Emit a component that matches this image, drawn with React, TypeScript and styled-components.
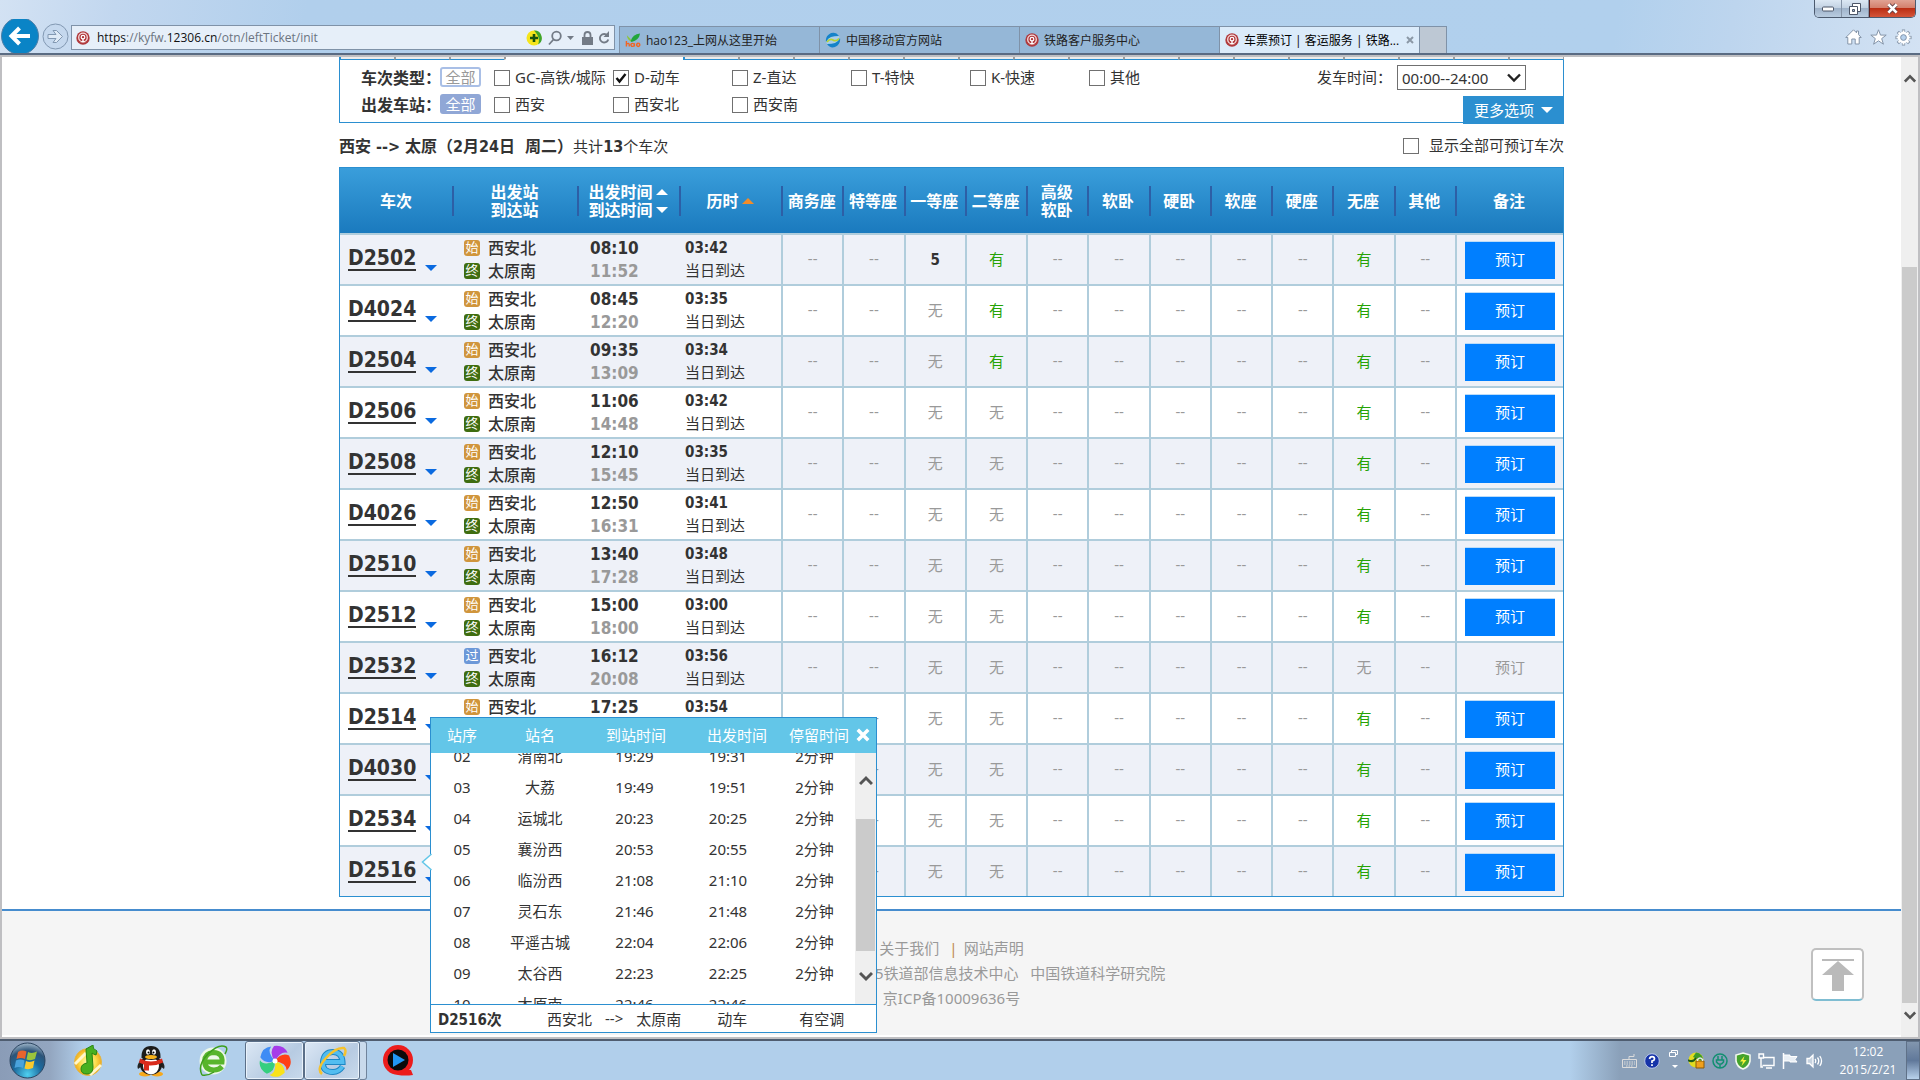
import React from "react";
import styled, { createGlobalStyle, css } from "styled-components";

const sans = `"Noto Sans", "Noto Sans CJK SC", sans-serif`;
const tahoma = `"DejaVu Sans Condensed", "Noto Sans", "Noto Sans CJK SC", sans-serif`;
const shell = `"Open Sans", "Noto Sans CJK SC", sans-serif`;

const GlobalStyle = createGlobalStyle`
  *, *::before, *::after { box-sizing: border-box; }
  body { margin: 0; color: #333; font-family: ${sans}; font-size: 15px; }
  button, select, input { font-family: inherit; font-size: inherit; color: inherit; margin: 0; }
  button { border: 0; padding: 0; background: none; cursor: pointer; }
  a { color: inherit; text-decoration: none; }
  svg { display: block; flex: none; }
`;

/* ---------- Browser window ---------- */

const Desktop = styled.div`
  display: flex;
  flex-direction: column;
  height: 100vh;
  overflow: hidden;
`;

const TopBar = styled.header`
  display: flex;
  align-items: flex-end;
  flex: none;
  height: 55px;
  border-bottom: 2px solid #5a6b82;
  background: linear-gradient(100deg, #d3e2f3 0, #c2d7ef 6%, #b1cfec 16%, #b1d0ed 84%, #bdd5ee 90%, #d3e2f3 100%);
  font-family: ${shell};
  font-size: 12px;
`;

const NavButtons = styled.div`
  display: flex;
  align-items: center;
  flex: none;
  gap: 3px;
  width: 71px;
  height: 34px;
  padding-left: 1px;
  overflow: hidden;
`;

const AddressBar = styled.form`
  display: flex;
  align-items: center;
  flex: 0 1 544px;
  gap: 5px;
  height: 25px;
  margin-bottom: 3px;
  padding: 0 4px;
  border: 1px solid #7f92a8;
  background: #e6eff9;
`;

const Url = styled.div`
  flex: 1;
  padding-left: 2px;
  color: #6b7480;
  white-space: nowrap;
  b { color: #111; font-weight: 400; }
`;

const Tabs = styled.nav`
  display: flex;
  flex: 0 1 828px;
  height: 27px;
  margin-left: 4px;
  border: 1px solid #7f92a8;
  border-bottom: 0;
`;

const Tab = styled.a<{ $active?: boolean }>`
  display: flex;
  align-items: center;
  flex: 0 0 200px;
  gap: 5px;
  padding: 0 5px;
  border-right: 1px solid #7f92a8;
  background: ${(p) => (p.$active ? "#dbebfa" : "#95b7d7")};
  color: ${(p) => (p.$active ? "#000" : "#222")};
  white-space: nowrap;
`;

const TabTitle = styled.span`
  flex: 1;
`;

const NewTab = styled.button`
  flex: 1;
  background: #bdc8d4;
`;

const WindowSide = styled.div`
  display: flex;
  flex-direction: column;
  align-items: flex-end;
  justify-content: space-between;
  height: 53px;
  margin-left: auto;
  padding: 0 4px 7px 0;
`;

const WindowButtons = styled.div`
  display: flex;
  height: 18px;
  border: 1px solid #4c5a6e;
  border-top: 0;
  border-radius: 0 0 5px 5px;
  overflow: hidden;
`;

const WindowButton = styled.button<{ $close?: boolean }>`
  display: flex;
  align-items: center;
  justify-content: center;
  width: ${(p) => (p.$close ? 46 : 27)}px;
  border-left: ${(p) => (p.$close ? 1 : 0)}px solid #5a2020;
  border-right: ${(p) => (p.$close ? 0 : 1)}px solid #8594a8;
  background: ${(p) =>
    p.$close
      ? "linear-gradient(#e0a394 0, #d4806d 45%, #bb2e14 50%, #d4553a 100%)"
      : "linear-gradient(#dce8f4 0, #c3d2e3 45%, #9fb3ca 50%, #b9cce0 100%)"};
`;

const ToolIcons = styled.div`
  display: flex;
  gap: 8px;
  padding-right: 4px;
`;

const Frame = styled.div`
  display: flex;
  flex: 1;
  min-height: 0;
  border: 2px solid #bfbfc2;
  background: #fff;
`;

const Page = styled.main`
  display: flex;
  flex-direction: column;
  flex: 1;
  min-width: 0;
  overflow: hidden;
`;

const ScrollTrack = styled.div<{ $pad: number; $bottom: number; $width: number }>`
  display: flex;
  flex-direction: column;
  align-items: center;
  flex: none;
  width: ${(p) => p.$width}px;
  padding: ${(p) => p.$pad}px 0 ${(p) => p.$bottom}px;
  background: #efefef;
`;

const ScrollThumb = styled.div<{ $before: number; $after: number }>`
  flex: 1;
  width: calc(100% - 2px);
  margin: ${(p) => p.$before}px 0 ${(p) => p.$after}px;
  background: #cbcbcb;
`;

/* ---------- Ticket search page ---------- */

const Content = styled.div`
  width: 100%;
  max-width: 1225px;
  margin: 0 auto 12px;
`;

const DateTabs = styled.div`
  display: flex;
  height: 3px;
`;

const DateTab = styled.span<{ $selected?: boolean }>`
  flex: ${(p) => (p.$selected ? "0 0 179px" : "1 0 0")};
  border-left: 2px solid #9c9c9c;
  border-bottom: 1px solid ${(p) => (p.$selected ? "#fff" : "#2b8fd0")};
  background: ${(p) => (p.$selected ? "#fff" : "#ececec")};
  &:first-child, &:nth-child(5) { border-left-color: #2b8fd0; }
  &:last-child { border-right: 1px solid #9c9c9c; }
`;

const Filters = styled.section`
  position: relative;
  padding: 3px 37px 5px 21px;
  border: 1px solid #2b8fd0;
  border-top: 0;
`;

const FilterRow = styled.div`
  display: flex;
  align-items: center;
  height: 27px;
`;

const FilterName = styled.b`
  width: 79px;
  font-size: 16px;
  white-space: nowrap;
`;

const AllTag = styled.button<{ $on?: boolean }>`
  width: 41px;
  height: 20px;
  margin-right: 13px;
  border: 2px solid ${(p) => (p.$on ? "#90a7d6" : "#a9bfe6")};
  border-radius: 3px;
  background: ${(p) => (p.$on ? "#90a7d6" : "#fff")};
  color: ${(p) => (p.$on ? "#fff" : "#999")};
  line-height: 16px;
`;

const CheckLabel = styled.label<{ $wide?: boolean }>`
  display: flex;
  align-items: center;
  gap: ${(p) => (p.$wide ? 10 : 5)}px;
  width: ${(p) => (p.$wide ? "auto" : "119px")};
  white-space: nowrap;
`;

const CheckBox = styled.input`
  flex: none;
  width: 16px;
  height: 16px;
  appearance: none;
  border: 1px solid #707070;
  background: #fff;
  && { margin-top: 2px; }
  &:checked {
    background: #fff
      url("data:image/svg+xml,%3Csvg xmlns='http://www.w3.org/2000/svg' viewBox='0 0 14 14'%3E%3Cpath d='M2.5 7l3 3.5L11.500 3' fill='none' stroke='%23111' stroke-width='2.400'/%3E%3C/svg%3E");
  }
`;

const DepartTime = styled.label`
  display: flex;
  align-items: center;
  gap: 5px;
  margin-left: auto;
`;

const SelectBox = styled.span`
  display: grid;
  align-items: center;
  width: 129px;
  padding-top: 2px;
  > * { grid-area: 1 / 1; }
  svg { justify-self: end; margin-right: 5px; pointer-events: none; }
`;

const Select = styled.select`
  width: 100%;
  height: 25px;
  padding: 0 4px;
  appearance: none;
  border: 1px solid #707070;
  border-radius: 0;
  background: #fff;
`;

const MoreButton = styled.button`
  position: absolute;
  right: -1px;
  bottom: -2px;
  display: flex;
  align-items: center;
  justify-content: center;
  gap: 7px;
  width: 101px;
  height: 28px;
  padding-bottom: 1px;
  background: #2b8fd0;
  color: #fff;
`;

const Summary = styled.div`
  display: flex;
  align-items: center;
  justify-content: space-between;
  height: 44px;
  padding-bottom: 1px;
  white-space: pre;
  b { font-family: ${tahoma}; font-size: 16px; }
`;

const Result = styled.div`
  position: relative;
`;

const TrainTable = styled.table`
  width: 100%;
  table-layout: fixed;
  border: 1px solid #2b8fd0;
  border-collapse: separate;
  border-spacing: 0;
`;

const Column = styled.col<{ $w?: number }>`
  width: ${(p) => (p.$w ? `${p.$w}px` : "auto")};
`;

const HeadRow = styled.tr`
  background: linear-gradient(#3a9edb, #1a7abe);
`;

const HeadCell = styled.th`
  height: 65px;
  padding: 0;
  color: #fff;
  font-size: 16px;
  line-height: 18px;
  white-space: nowrap;
  & + & {
    background: linear-gradient(#2d5fa6, #2d5fa6) left center / 2px 30px no-repeat;
  }
`;

const HeadLine = styled.span`
  display: flex;
  align-items: center;
  justify-content: center;
  gap: 3px;
`;

const Row = styled.tr`
  &:nth-child(odd) { background: #eef1f8; }
`;

const Cell = styled.td<{ $pad?: number; $seat?: boolean; $tone?: string; $bold?: boolean }>`
  height: 51px;
  padding: 0 0 0 ${(p) => p.$pad ?? 0}px;
  border-top: 2px solid #b0cddc;
  color: ${(p) => p.$tone ?? "#333"};
  white-space: nowrap;
  ${(p) => p.$seat && css`padding-bottom: 3px; border-left: 2px solid #b0cddc; text-align: center;`}
  ${(p) => p.$bold && css`font-family: ${tahoma}; font-weight: 700; padding-bottom: 0;`}
`;

const BookCell = styled(Cell)`
  padding-bottom: 0;
`;

const TrainLink = styled.a`
  display: flex;
  align-items: center;
  gap: 9px;
  font: 700 21px/24px ${tahoma};
  span { border-bottom: 2px solid #333; line-height: 21px; }
  svg { margin-top: 17px; }
`;

const Line = styled.div`
  display: flex;
  align-items: center;
  height: 23px;
`;

const Station = styled.b`
  margin-left: 8px;
  padding-bottom: 2px;
  font-size: 16px;
  font-weight: 500;
`;

const Arrival = styled.span`
  padding-bottom: 3px;
`;

const StationMark = styled.span<{ $kind: string }>`
  width: 16px;
  height: 16px;
  border-radius: 3px;
  background: ${(p) => ({ 始: "#d0953c", 终: "#3f6d10", 过: "#6c98d8" } as Record<string, string>)[p.$kind]};
  color: #fff;
  font-size: 13px;
  line-height: 15px;
  text-align: center;
`;

const Time = styled.b<{ $arrive?: boolean; $small?: boolean }>`
  color: ${(p) => (p.$arrive ? "#999" : "#333")};
  font-family: ${tahoma};
  font-size: ${(p) => (p.$small ? 15 : 17)}px;
`;

const BookButton = styled.button`
  width: 90px;
  height: 38px;
  padding-bottom: 3px;
  border-top: 1px solid #bcdcf8;
  background: #007fff;
  color: #fff;
`;

/* ---------- Stops pop-up ---------- */

const Popup = styled.aside`
  position: absolute;
  top: 550px;
  left: 91px;
  width: 447px;
  border: 1px solid #2b8fd0;
  background: #fff;
`;

const Pointer = styled.svg`
  position: absolute;
  top: 135px;
  left: -10px;
`;

const PopupHead = styled.div`
  display: flex;
  align-items: center;
  height: 35px;
  padding-bottom: 2px;
  background: #63c6e8;
  color: #fff;
`;

const PopupCol = styled.span<{ $w: number }>`
  flex: 0 0 ${(p) => p.$w}px;
  text-align: center;
  white-space: nowrap;
`;

const CloseButton = styled.button`
  display: flex;
  justify-content: center;
  flex: 1;
`;

const PopupBody = styled.div`
  display: flex;
  height: 251px;
  overflow: hidden;
`;

const StopTable = styled.table`
  width: 424px;
  height: 279px;
  margin-top: -13px;
  table-layout: fixed;
  border-spacing: 0;
  td { height: 31px; padding: 0; text-align: center; line-height: 20px; }
`;

const PopupFoot = styled.div`
  display: flex;
  align-items: center;
  height: 28px;
  padding: 0 0 1px 7px;
  border-top: 1px solid #2b8fd0;
  b { flex: 0 0 109px; font-family: ${tahoma}; }
  span { flex: none; }
  span + span { margin-left: 13px; }
  em { font-style: normal; margin-left: 36px; }
  em + em { margin-left: 52px; }
`;

/* ---------- Page footer ---------- */

const Footer = styled.footer`
  display: flex;
  justify-content: center;
  flex: 1;
  margin-bottom: 2px;
  padding-top: 25px;
  border-top: 2px solid #468cce;
  background: #f5f5f5;
  color: #999;
  line-height: 25px;
  text-align: center;
  white-space: pre;
`;

const FooterText = styled.div`
  flex: 1;
  padding-left: 90px;
`;

const Divider = styled.i`
  padding: 0 6px 0 10px;
  color: #c08850;
  font-style: normal;
`;

const ToTop = styled.button`
  display: flex;
  justify-content: center;
  width: 53px;
  height: 53px;
  margin: 12px 37px 0 0;
  padding-top: 9px;
  border: 2px solid #c0c0c0;
  border-bottom-color: #7fbdd2;
  border-radius: 5px;
  background: #fff;
`;

/* ---------- Taskbar ---------- */

const Taskbar = styled.footer`
  display: flex;
  align-items: center;
  flex: none;
  height: 41px;
  border-top: 2px solid #4f5d70;
  background: linear-gradient(90deg, #8a9cb7 0, #93a6c0 50px, #b1cfeb 84px, #b1cfeb 1570px, #8aa0b9 1620px, #8aa0b9 100%);
  color: #fff;
  font-family: ${shell};
`;

const TaskButton = styled.button<{ $open?: boolean; $w: number }>`
  display: flex;
  align-items: center;
  justify-content: center;
  width: ${(p) => p.$w}px;
  height: 39px;
  ${(p) =>
    p.$open &&
    css`
      border: 1px solid #5b6f88;
      border-radius: 3px;
      background: linear-gradient(135deg, #dce8f5, #b7cbe2 60%, #c9daec);
      box-shadow: inset 0 0 0 1px #e9f2fb;
    `}
`;

const StackEdge = styled.span`
  width: 7px;
  height: 39px;
  margin-right: 3px;
  border: 1px solid #70849c;
  border-left: 0;
  border-radius: 0 3px 3px 0;
  background: #c9daec;
`;

const Tray = styled.div`
  display: flex;
  align-items: center;
  gap: 7px;
  height: 39px;
  margin-left: auto;
`;

const Clock = styled.time`
  width: 76px;
  font-size: 12px;
  line-height: 18px;
  text-align: center;
`;

const ShowDesktop = styled.button`
  width: 14px;
  height: 39px;
  border: 1px solid #5f7188;
  background: linear-gradient(#8296ae 0, #60789a 50%, #b9d2ec 100%);
`;

/* ---------- Drawings ---------- */

const RailLogo = () => (
  <svg width="14" height="14" viewBox="0 0 14 14">
    <circle cx="7" cy="7" r="6.700" fill="#b0393c" />
    <circle cx="7" cy="6.500" r="4.300" fill="none" stroke="#f6dcdc" strokeWidth="1.300" />
    <circle cx="7" cy="6.200" r="1.800" fill="none" stroke="#fff" strokeWidth="1.200" />
    <path d="M6.300 7h1.400v3l2 1.300H4.300l2-1.300z" fill="#fff" />
  </svg>
);

const HaoLogo = () => (
  <svg width="16" height="16" viewBox="0 0 17 16">
    <path d="M2 3l4 4 1 3C4 9 2 6 2 3z" fill="#8dc63f" />
    <path d="M6 9Q8 2 16 1q-1 7-9 9z" fill="#22a63b" />
    <path d="M1.500 9v6M1.500 12.500q2.500-2 3 .5v2M10 11.500v3.500M10 13q-1-2-3-1.200-1.500 1.200 0 2.800 2 .7 3-1M14 11.500a1.700 1.700 0 1 0 .1 0" fill="none" stroke="#f26522" strokeWidth="1.500" />
  </svg>
);

const MobileLogo = () => (
  <svg width="16" height="16" viewBox="0 0 16 16" fill="none" strokeWidth="1.700">
    <circle cx="8" cy="8" r="7" fill="#a9cdea" />
    <path d="M6 1Q0 4 1 10q2-4 5-5t8-1Q11-.5 6 1z" fill="#1583c9" />
    <path d="M10 15q6-3 5-9-2 4-5 5t-8 1q3 4.500 8 3z" fill="#1583c9" />
    <path d="M2 10q3-4 6-2t6-1.500" stroke="#b5d334" />
  </svg>
);

const Gear = () => (
  <svg width="17" height="17" viewBox="-9 -9 18 18">
    {[3.4, 2].map((w, layer) =>
      Array.from({ length: 8 }, (_, i) => (
        <path key={`${layer}-${i}`} d={layer ? "M0-4.500V-7.500" : "M0-4V-8.500"} stroke={layer ? "#fff" : "#8494a8"} strokeWidth={w} transform={`rotate(${i * 45})`} />
      ))
    )}
    <circle r="4.700" fill="#b7d2ee" stroke="#fff" strokeWidth="2.800" />
    <circle r="3" fill="none" stroke="#8494a8" />
  </svg>
);

const Chevron = ({ up, size = 14 }: { up?: boolean; size?: number }) => (
  <svg width={size} height="11" viewBox="0 0 14 11">
    <path d={up ? "M1 9l6-6 6 6" : "M1 2l6 6 6-6"} fill="none" stroke="#555" strokeWidth="3" />
  </svg>
);

const Triangle = ({ up, color }: { up?: boolean; color: string }) => (
  <svg width="12" height="6" viewBox="0 0 12 6">
    <path d={up ? "M0 6L6 0l6 6z" : "M0 0h12L6 6z"} fill={color} />
  </svg>
);

const Cross = ({ size, edge }: { size: number; edge?: string }) => (
  <svg width={size} height={size} viewBox="0 0 12 12">
    {edge && <path d="M2 2l8 8M10 2l-8 8" stroke={edge} strokeWidth="4.500" />}
    <path d="M1.500 1.500l9 9M10.500 1.500l-9 9" stroke="#fff" strokeWidth="3" />
  </svg>
);

/* ---------- Data ---------- */

type Seat = string;
type Train = { no: string; depart: string; arrive: string; span: string; pass?: boolean; first?: Seat; second?: Seat };

const trains: Train[] = [
  { no: "D2502", depart: "08:10", arrive: "11:52", span: "03:42", first: "5", second: "有" },
  { no: "D4024", depart: "08:45", arrive: "12:20", span: "03:35", second: "有" },
  { no: "D2504", depart: "09:35", arrive: "13:09", span: "03:34", second: "有" },
  { no: "D2506", depart: "11:06", arrive: "14:48", span: "03:42" },
  { no: "D2508", depart: "12:10", arrive: "15:45", span: "03:35" },
  { no: "D4026", depart: "12:50", arrive: "16:31", span: "03:41" },
  { no: "D2510", depart: "13:40", arrive: "17:28", span: "03:48" },
  { no: "D2512", depart: "15:00", arrive: "18:00", span: "03:00" },
  { no: "D2532", depart: "16:12", arrive: "20:08", span: "03:56", pass: true },
  { no: "D2514", depart: "17:25", arrive: "21:19", span: "03:54" },
  { no: "D4030", depart: "17:55", arrive: "21:40", span: "03:45" },
  { no: "D2534", depart: "18:20", arrive: "22:05", span: "03:45" },
  { no: "D2516", depart: "19:00", arrive: "22:46", span: "03:46" },
];

const seatHeads = ["商务座", "特等座", "一等座", "二等座", "高级|软卧", "软卧", "硬卧", "软座", "硬座", "无座", "其他"];

const stops = [
  ["02", "渭南北", "19:29", "19:31", "2分钟"],
  ["03", "大荔", "19:49", "19:51", "2分钟"],
  ["04", "运城北", "20:23", "20:25", "2分钟"],
  ["05", "襄汾西", "20:53", "20:55", "2分钟"],
  ["06", "临汾西", "21:08", "21:10", "2分钟"],
  ["07", "灵石东", "21:46", "21:48", "2分钟"],
  ["08", "平遥古城", "22:04", "22:06", "2分钟"],
  ["09", "太谷西", "22:23", "22:25", "2分钟"],
  ["10", "太原南", "22:46", "22:46", ""],
];

const seatsOf = (t: Train): Seat[] => [
  "--", "--", t.first ?? "无", t.second ?? "无", "--", "--", "--", "--", "--", t.pass ? "无" : "有", "--",
];

const toneOf = (s: Seat) => (s === "有" ? "#26a306" : s === "无" || s === "--" ? "#999" : "#333");

/* ---------- Parts ---------- */

const Check = ({ text, checked, wide }: { text: string; checked?: boolean; wide?: boolean }) => (
  <CheckLabel $wide={wide}>
    <CheckBox type="checkbox" defaultChecked={checked} />
    {text}
  </CheckLabel>
);

const BrowserTop = () => (
  <TopBar>
    <NavButtons>
      <button aria-label="后退">
        <svg width="38" height="38" viewBox="0 0 38 38">
          <circle cx="19" cy="19" r="18.500" fill="#0a84c6" stroke="#4c7fa8" />
          <path d="M29 19H11M18.500 11l-8 8 8 8" fill="none" stroke="#fff" strokeWidth="4" />
        </svg>
      </button>
      <button aria-label="前进">
        <svg width="27" height="27" viewBox="0 0 27 27" fill="none" stroke="#8298b2">
          <circle cx="13.500" cy="13.500" r="12.500" fill="#c5d8ee" />
          <path d="M6 11.500h8l-3-4h3.500l6 6-6 6H11l3-4H6z" fill="#dfeaf6" />
        </svg>
      </button>
    </NavButtons>
    <AddressBar>
      <RailLogo />
      <Url><b>https</b>://kyfw.<b>12306.cn</b>/otn/leftTicket/init</Url>
      <svg width="16" height="16" viewBox="0 0 16 16">
        <circle cx="8" cy="8" r="7.500" fill="#f5e51c" />
        <path d="M8 .5a7.500 7.500 0 0 1 4 14Q15 8 8 .5z" fill="#3ea52c" />
        <path d="M8 4v8M4 8h8" stroke="#17520e" strokeWidth="2.600" />
      </svg>
      <svg width="30" height="16" viewBox="0 0 30 16" fill="none" stroke="#737b86" strokeWidth="1.800">
        <circle cx="9.500" cy="6" r="4.300" />
        <path d="M6.500 9.500L2 14.500" />
        <path d="M20 6h7l-3.500 4z" fill="#737b86" stroke="none" />
      </svg>
      <svg width="11" height="14" viewBox="0 0 11 14">
        <path d="M0 6h11v8H0z" fill="#737b86" />
        <path d="M2.500 7V4a3 3 0 0 1 6 0v3" fill="none" stroke="#737b86" strokeWidth="1.800" />
      </svg>
      <svg width="12" height="14" viewBox="0 0 12 14">
        <path d="M9.500 4.500A4.300 4.300 0 1 0 10.300 8.500" fill="none" stroke="#737b86" strokeWidth="1.900" />
        <path d="M11 0v6H5.500z" fill="#737b86" />
      </svg>
    </AddressBar>
    <Tabs>
      <Tab href="#"><HaoLogo /><TabTitle>hao123_上网从这里开始</TabTitle></Tab>
      <Tab href="#"><MobileLogo /><TabTitle>中国移动官方网站</TabTitle></Tab>
      <Tab href="#"><RailLogo /><TabTitle>铁路客户服务中心</TabTitle></Tab>
      <Tab href="#" $active>
        <RailLogo />
        <TabTitle>车票预订 | 客运服务 | 铁路...</TabTitle>
        <svg width="8" height="8" viewBox="0 0 8 8"><path d="M1 1l6 6M7 1L1 7" stroke="#8b98a6" strokeWidth="2" /></svg>
      </Tab>
      <NewTab aria-label="新选项卡" />
    </Tabs>
    <WindowSide>
      <WindowButtons>
        <WindowButton aria-label="最小化">
          <svg width="12" height="6" viewBox="0 0 12 6"><rect x=".5" y="1" width="11" height="4" rx="1" fill="#fff" stroke="#4c5668" /></svg>
        </WindowButton>
        <WindowButton aria-label="还原">
          <svg width="12" height="12" viewBox="0 0 12 12" fill="#fff" stroke="#4c5668">
            <path d="M3.500.5h8v8h-8z" />
            <path d="M.5 3.500h8v8h-8z" />
            <path d="M3.500 6.500h2v2h-2z" fill="#a9bbd0" />
          </svg>
        </WindowButton>
        <WindowButton aria-label="关闭" $close><Cross size={11} edge="#5c3f46" /></WindowButton>
      </WindowButtons>
      <ToolIcons>
        <svg width="17" height="16" viewBox="0 0 17 16" fill="#fff" stroke="#8494a8">
          <path d="M8.500.8L.8 8.500h2V15h4v-5h3.400v5h4V8.500h2L13.500 5.500V2h-2v1.800z" />
        </svg>
        <svg width="17" height="16" viewBox="0 0 17 16" fill="#fff" stroke="#8494a8">
          <path d="M8.500.8l2 5.300h5.700l-4.500 3.500 1.700 5.600-4.900-3.400-4.900 3.400 1.700-5.600L.8 6.100h5.700z" />
        </svg>
        <Gear />
      </ToolIcons>
    </WindowSide>
  </TopBar>
);

const FilterPanel = () => (
  <>
    <DateTabs>
      {Array.from({ length: 20 }, (_, i) => <DateTab key={i} $selected={i === 3} />)}
    </DateTabs>
    <Filters>
      <FilterRow>
        <FilterName>车次类型：</FilterName>
        <AllTag>全部</AllTag>
        <Check text="GC-高铁/城际" />
        <Check text="D-动车" checked />
        <Check text="Z-直达" />
        <Check text="T-特快" />
        <Check text="K-快速" />
        <Check text="其他" />
        <DepartTime>
          发车时间：
          <SelectBox>
            <Select defaultValue="all"><option value="all">00:00--24:00</option></Select>
            <svg width="14" height="10" viewBox="0 0 14 10"><path d="M1 1.500l6 6 6-6" fill="none" stroke="#222" strokeWidth="2.400" /></svg>
          </SelectBox>
        </DepartTime>
      </FilterRow>
      <FilterRow>
        <FilterName>出发车站：</FilterName>
        <AllTag $on>全部</AllTag>
        <Check text="西安" />
        <Check text="西安北" />
        <Check text="西安南" />
      </FilterRow>
      <MoreButton>更多选项 <Triangle color="#fff" /></MoreButton>
    </Filters>
  </>
);

const TrainRow = ({ train }: { train: Train }) => (
  <Row>
    <Cell $pad={8}>
      <TrainLink href="#"><span>{train.no}</span><Triangle color="#0a6ae0" /></TrainLink>
    </Cell>
    <Cell $pad={12}>
      <Line><StationMark $kind={train.pass ? "过" : "始"}>{train.pass ? "过" : "始"}</StationMark><Station>西安北</Station></Line>
      <Line><StationMark $kind="终">终</StationMark><Station>太原南</Station></Line>
    </Cell>
    <Cell $pad={13}>
      <Line><Time>{train.depart}</Time></Line>
      <Line><Time $arrive>{train.arrive}</Time></Line>
    </Cell>
    <Cell $pad={6}>
      <Line><Time $small>{train.span}</Time></Line>
      <Line><Arrival>当日到达</Arrival></Line>
    </Cell>
    {seatsOf(train).map((s, i) => (
      <Cell key={i} $seat $tone={toneOf(s)} $bold={s === "5"}>{s}</Cell>
    ))}
    {train.pass ? <Cell $seat $tone="#999">预订</Cell> : <BookCell $seat><BookButton>预订</BookButton></BookCell>}
  </Row>
);

const StopsPopup = () => (
  <Popup>
    <PopupHead>
      <PopupCol $w={62}>站序</PopupCol>
      <PopupCol $w={94}>站名</PopupCol>
      <PopupCol $w={98}>到站时间</PopupCol>
      <PopupCol $w={104}>出发时间</PopupCol>
      <PopupCol $w={54}>停留时间</PopupCol>
      <CloseButton aria-label="关闭"><Cross size={14} /></CloseButton>
    </PopupHead>
    <PopupBody>
      <StopTable>
        <colgroup><Column $w={62} /><Column $w={94} /><Column $w={95} /><Column $w={92} /><Column /></colgroup>
        <tbody>
          {stops.map((s) => <tr key={s[0]}>{s.map((v, i) => <td key={i}>{v}</td>)}</tr>)}
        </tbody>
      </StopTable>
      <ScrollTrack $pad={22} $bottom={22} $width={21}>
        <Chevron up />
        <ScrollThumb $before={33} $after={20} />
        <Chevron />
      </ScrollTrack>
    </PopupBody>
    <PopupFoot>
      <b>D2516次</b>
      <span>西安北</span><span>--&gt;</span><span>太原南</span>
      <em>动车</em><em>有空调</em>
    </PopupFoot>
    <Pointer width="11" height="18" viewBox="0 0 11 18">
      <path d="M11 0v18L1 9z" fill="#fff" />
      <path d="M10.500 1L1.500 9l9 8" fill="none" stroke="#63c6e8" strokeWidth="1.500" />
    </Pointer>
  </Popup>
);

const TaskIcons = () => (
  <>
    <TaskButton $w={54} aria-label="开始">
      <svg width="37" height="37" viewBox="0 0 37 37">
        <defs>
          <radialGradient id="orb" cx=".5" cy=".9" r=".9">
            <stop offset="0" stopColor="#4fd0f0" /><stop offset=".45" stopColor="#1b6a9e" /><stop offset=".75" stopColor="#2d5478" /><stop offset="1" stopColor="#9fb6ca" />
          </radialGradient>
        </defs>
        <circle cx="18.500" cy="18.500" r="17.500" fill="url(#orb)" stroke="#2b4460" />
        <path d="M9 10q4-2.500 8.500-.5L16 17q-4-2-8.500 0z" fill="#e8642c" />
        <path d="M19 10q4 2 9-.5L26 17q-4 2-8.500.5z" fill="#9ac43c" />
        <path d="M7 18.500q4-2 8.500 0L14 26q-4-2-8.500 0z" fill="#4aa3dc" />
        <path d="M17 19q4 2 8.500-.5L24 26q-4.500 2-8.500.5z" fill="#fbc92c" />
      </svg>
    </TaskButton>
    <TaskButton $w={68} aria-label="音乐">
      <svg width="30" height="32" viewBox="0 0 30 32">
        <defs><radialGradient id="disc"><stop offset="0" stopColor="#fffbb0" /><stop offset=".6" stopColor="#fbdc4c" /><stop offset="1" stopColor="#f0a91c" /></radialGradient></defs>
        <circle cx="15" cy="17" r="13.500" fill="url(#disc)" stroke="#e2b748" />
        <path d="M2 19L13 8M17 30l11-10" stroke="#fff6cc" strokeWidth="3" fill="none" />
        <path d="M13 4l7-4q-1 4 4 6l-1 4q-3-1-4-2l1 14q0 7-6 7t-6-5 6-6z" fill="#48b01f" stroke="#268511" />
      </svg>
    </TaskButton>
    <TaskButton $w={58} aria-label="QQ">
      <svg width="30" height="32" viewBox="0 0 30 32">
        <ellipse cx="9" cy="29" rx="6" ry="2.500" fill="#f7a81b" /><ellipse cx="21" cy="29" rx="6" ry="2.500" fill="#f7a81b" />
        <path d="M5 14Q0 21 2 24l4-3M25 14q5 7 3 10l-4-3" fill="#222" />
        <ellipse cx="15" cy="20" rx="11" ry="10" fill="#1c1c1c" /><ellipse cx="15" cy="21" rx="8" ry="8.500" fill="#fff" />
        <path d="M5.500 13Q5 1 15 1t9.500 12q-9 4-19 0z" fill="#1c1c1c" />
        <ellipse cx="12" cy="7" rx="2" ry="2.700" fill="#fff" /><ellipse cx="18" cy="7" rx="2" ry="2.700" fill="#fff" />
        <circle cx="12.500" cy="7.500" r="1" /><circle cx="17.500" cy="7.500" r="1" />
        <ellipse cx="15" cy="12" rx="6" ry="2" fill="#f7b21b" />
        <path d="M4 13.500q11 6 22 0l1 4q-7 3.500-14 3v5H8v-6q-3-1-5-2z" fill="#d92b1c" />
      </svg>
    </TaskButton>
    <TaskButton $w={65} aria-label="360浏览器">
      <svg width="30" height="32" viewBox="0 0 30 32" fill="none">
        <circle cx="15" cy="16" r="13.500" fill="#eef8e8" />
        <path d="M7 17h17q1-9-8.500-9.500Q7 8 6.500 16.500 7 25 16 25q5 0 8-3.500" stroke="#58b52c" strokeWidth="5" />
        <path d="M4 30Q-1 20 10 9T28 2q2 2-1 7M4 30q6 1 12-3" stroke="#3d9e1d" strokeWidth="1.500" />
      </svg>
    </TaskButton>
    <TaskButton $open $w={59} aria-label="浏览器">
      <svg width="32" height="32" viewBox="-16 -16 32 32">
        {["#a63be8", "#ff4016", "#f9e21a", "#35cf7f", "#3f8cf5"].map((c, i) => (
          <path key={c} d="M0 0Q-7-8-2-15 8-17 12-9 5-11 0 0z" fill={c} transform={`rotate(${i * 72 + 4})`} />
        ))}
        <circle r="2.500" fill="#fff" />
      </svg>
    </TaskButton>
    <TaskButton $open $w={56} aria-label="Internet Explorer">
      <svg width="30" height="32" viewBox="0 0 30 32" fill="none">
        <path d="M8 17h17.500Q25 7 16 7T6 17 16 27q6 0 9.500-5.500" stroke="#1e86c4" strokeWidth="6" />
        <path d="M8 17h17.500Q25 7 16 7T6 17 16 27q6 0 9.500-5.500" stroke="#52bdf0" strokeWidth="4" />
        <path d="M5 29q-6-5 4-16T27 3q3 2 0 8" stroke="#f5c22c" strokeWidth="2.500" />
      </svg>
    </TaskButton>
    <StackEdge />
    <TaskButton $w={56} aria-label="播放器">
      <svg width="32" height="32" viewBox="0 0 32 32">
        <circle cx="16" cy="15" r="15" fill="#ec1c1c" /><path d="M16 25h13l2 5q-8 1-15 0z" fill="#ec1c1c" />
        <circle cx="16" cy="15" r="10.500" fill="#0a0a0a" /><path d="M11 8l12 7-12 7z" fill="#2196f3" />
      </svg>
    </TaskButton>
  </>
);

const TrayIcons = () => (
  <>
    <svg width="15" height="14" viewBox="0 0 15 14" fill="none" stroke="#dcdcdc">
      <path d="M.5 5.500h14v8H.5zM7 5V2.500h5V0" /><path d="M2 8h11M2 10h11M4 12h7" strokeDasharray="1.500 1" />
    </svg>
    <svg width="16" height="16" viewBox="0 0 16 16" fill="none">
      <circle cx="8" cy="8" r="7.300" fill="#1633a8" stroke="#b8c6e8" />
      <path d="M5.500 6Q6 3.500 8.200 3.600t2.300 2.200Q10.300 7.500 8 8v2M8 11.300v1.700" stroke="#fff" strokeWidth="1.700" />
    </svg>
    <svg width="14" height="24" viewBox="0 0 14 24" fill="none" stroke="#fff">
      <path d="M4.500 3V1.500h6v4H9M2.500 3.500h6v4h-6z" /><path d="M5 16h6l-3 3z" fill="#fff" stroke="none" />
    </svg>
    <svg width="17" height="18" viewBox="0 0 17 18">
      <circle cx="8" cy="8" r="7.500" fill="#e2dc22" /><path d="M8 .5a7.500 7.500 0 0 1 7 9L5 5z" fill="#3d9c28" />
      <path d="M0 8q5 3 8-2" fill="none" stroke="#1f5c17" strokeWidth="2" />
      <path d="M8 9h8v7H8z" fill="#f0a01c" stroke="#8a5a0a" /><path d="M9.500 9V7.500q2.500-3 5 0V9" fill="none" stroke="#e8e8e8" strokeWidth="1.500" />
    </svg>
    <svg width="16" height="16" viewBox="0 0 16 16" fill="none" stroke="#128f72" strokeWidth="1.500">
      <circle cx="8" cy="8" r="7" /><path d="M6 3v4M10 3v4M4.500 7v2q3.500 4.500 7 0V7zM8 11v4" />
    </svg>
    <svg width="16" height="18" viewBox="0 0 16 18">
      <path d="M8 1l7 2v6q-1 6-7 8-6-2-7-8V3z" fill="#45a32c" stroke="#f2f8ee" strokeWidth="1.600" /><path d="M9.500 4L5 9.500h3L6.500 14 11.500 8H8.300z" fill="#f8f23a" />
    </svg>
    <svg width="17" height="16" viewBox="0 0 17 16" fill="none" stroke="#fff" strokeWidth="1.400">
      <path d="M6 4.500h10v8H4.500M8 15h6" /><path d="M1 1h4.500v4H1zM3 5v9h2" />
    </svg>
    <svg width="17" height="16" viewBox="0 0 17 16" fill="none" stroke="#fff" strokeWidth="1.500">
      <path d="M1.500 0v16" /><path d="M2 2h6v1.500h7l-2 3 2 2.500H8V8H2" fill="#e9eff5" strokeWidth="1" />
    </svg>
    <svg width="17" height="16" viewBox="0 0 17 16" fill="none" stroke="#fff" strokeWidth="1.300">
      <path d="M1 5.500h2.500L7 2v12l-3.500-3.500H1z" fill="#c6d2df" /><path d="M9 6q1.500 2 0 4M11.500 4.500q2.500 3.500 0 7M13.800 3q3.500 5 0 10" />
    </svg>
  </>
);

export default function App() {
  return (
    <Desktop>
      <GlobalStyle />
      <BrowserTop />
      <Frame>
        <Page>
          <Content>
            <FilterPanel />
            <Summary>
              <span><b>西安 --&gt; 太原（2月24日  周二）</b>共计<b>13</b>个车次</span>
              <Check wide text="显示全部可预订车次" />
            </Summary>
            <Result>
              <TrainTable>
                <colgroup>
                  <Column $w={112} /><Column $w={125} /><Column $w={102} /><Column $w={102} />
                  {seatHeads.map((h) => <Column key={h} />)}
                  <Column $w={108} />
                </colgroup>
                <thead>
                  <HeadRow>
                    <HeadCell>车次</HeadCell>
                    <HeadCell>出发站<br />到达站</HeadCell>
                    <HeadCell>
                      <HeadLine>出发时间<Triangle up color="#fff" /></HeadLine>
                      <HeadLine>到达时间<Triangle color="#fff" /></HeadLine>
                    </HeadCell>
                    <HeadCell><HeadLine>历时 <Triangle up color="#f28c28" /></HeadLine></HeadCell>
                    {seatHeads.map((h) => (
                      <HeadCell key={h}>
                        {h.split("|").map((line) => <HeadLine key={line}>{line}</HeadLine>)}
                      </HeadCell>
                    ))}
                    <HeadCell>备注</HeadCell>
                  </HeadRow>
                </thead>
                <tbody>{trains.map((t) => <TrainRow key={t.no} train={t} />)}</tbody>
              </TrainTable>
              <StopsPopup />
            </Result>
          </Content>
          <Footer>
            <FooterText>
              <a href="#">关于我们</a><Divider>|</Divider><a href="#">网站声明</a><br />
              版权所有©2008-2015铁道部信息技术中心   中国铁道科学研究院<br />
              京ICP备10009636号
            </FooterText>
            <ToTop aria-label="返回顶部">
              <svg width="34" height="34" viewBox="0 0 34 34" fill="#bababa">
                <path d="M1 0h32v2H1zM17 2l16 14H23v16H11V16H1z" />
              </svg>
            </ToTop>
          </Footer>
        </Page>
        <ScrollTrack $pad={16} $bottom={16} $width={17}>
          <Chevron up size={12} />
          <ScrollThumb $before={183} $after={7} />
          <Chevron size={12} />
        </ScrollTrack>
      </Frame>
      <Taskbar>
        <TaskIcons />
        <Tray>
          <TrayIcons />
          <Clock>12:02<br />2015/2/21</Clock>
        </Tray>
        <ShowDesktop aria-label="显示桌面" />
      </Taskbar>
    </Desktop>
  );
}
